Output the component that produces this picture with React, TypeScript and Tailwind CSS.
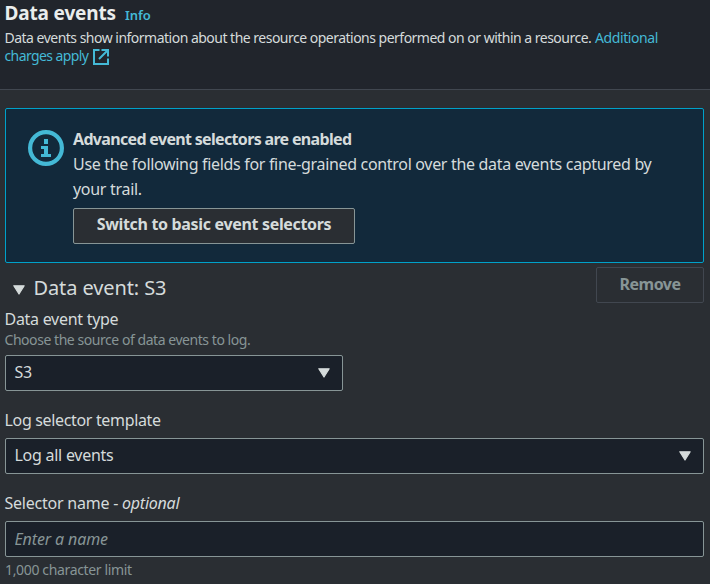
import React from "react";

function Caret() {
  return (
    <svg width="12" height="10" viewBox="0 0 12 10" className="shrink-0 fill-[#d5dbdb] stroke-[#d5dbdb]" strokeLinejoin="round">
      <path d="M.8 .8h10.400L6 9z" strokeWidth="1.200" />
    </svg>
  );
}

function ExternalIcon() {
  return (
    <svg width="16" height="16" viewBox="0 0 16 16" fill="none" className="ml-[5px] shrink-0 stroke-[#44b9d6]" strokeWidth="2">
      <path d="M6.500 1H1v14h14V9.500M8.500 1H15v6.500M14.500 1.500L6 10" />
    </svg>
  );
}

function InfoIcon() {
  return (
    <svg width="36" height="36" viewBox="0 0 36 36" className="mt-[21px] shrink-0 fill-[#44b9d6]">
      <circle cx="18" cy="18" r="15.900" fill="none" className="stroke-[#44b9d6]" strokeWidth="4.200" />
      <path d="M16 9h4v5h-4zM13 16h7v8h3v3H13v-3h3v-5h-3z" />
    </svg>
  );
}

export default function App() {
  return (
    <div className="h-[584px] w-[710px] overflow-hidden whitespace-nowrap bg-[#2a2e33] font-['Noto_Sans',sans-serif] text-[#d5dbdb]">
      <header className="h-[90px] border-b border-[#414750] bg-[#21252c] pl-[4.5px] pt-px">
        <div className="flex h-[25px] items-baseline">
          <h2 className="w-[120.5px] text-[19px] font-bold leading-6 tracking-[-0.15px] text-[#eaeded]">Data events</h2>
          <a className="text-[13px] font-semibold leading-6 tracking-[-0.1px] text-[#44b9d6]">Info</a>
        </div>
        <p className="flex h-5 text-[14px] leading-6 tracking-[-0.51px]">
          <span className="w-[590.5px]">Data events show information about the resource operations performed on or within a resource.</span>
          <a className="tracking-[-0.4px] text-[#44b9d6]">Additional</a>
        </p>
        <div className="flex h-[21px] items-center text-[14px] leading-[19px] tracking-[-0.6px] text-[#44b9d6]">
          <a className="pb-[3px]">charges apply</a>
          <ExternalIcon />
        </div>
      </header>

      <main className="pl-[5px] pr-[6px] pt-[18px]">
        <section className="flex h-[155px] rounded-[2px] border border-[#00a1c9] bg-[#12293b] pl-[22px]">
          <InfoIcon />
          <div className="pl-[9px] pt-[18px] text-[16px] leading-[25px]">
            <p className="font-bold tracking-[-0.67px]">Advanced event selectors are enabled</p>
            <p className="tracking-[-0.32px]">Use the following fields for fine-grained control over the data events captured by</p>
            <p className="tracking-[-0.3px]">your trail.</p>
            <button className="mt-[6px] h-9 w-[282px] rounded-[2px] border border-[#879596] bg-[#2a2e33] pb-[3px] text-[16px] font-bold tracking-[-0.33px]">
              Switch to basic event selectors
            </button>
          </div>
        </section>

        <div className="flex h-[46px] items-start justify-between pt-1">
          <h3 className="flex h-[42px] items-center pl-2 text-[20px]">
            <span className="pt-[3px]"><Caret /></span>
            <span className="pl-[8.5px] tracking-[-0.1px]">Data event: S3</span>
          </h3>
          <button className="h-9 w-[108px] rounded-[2px] border border-[#414750] pb-[2px] text-[16px] font-bold tracking-[-0.5px] text-[#879596]">Remove</button>
        </div>

        <label className="-ml-[0.5px] block h-[20px] text-[16px] leading-5 tracking-[-0.28px]">Data event type</label>
        <p className="-ml-[0.5px] h-[26px] text-[14px] leading-[21px] tracking-[-0.45px] text-[#879596]">Choose the source of data events to log.</p>
        <div className="flex h-9 w-[338px] items-center justify-between rounded-[2px] border border-[#879596] bg-[#1a2029] pl-[8.5px] pr-3">
          <span className="pb-[2px] text-[16px] tracking-[-0.2px]">S3</span>
          <Caret />
        </div>

        <label className="-ml-[0.5px] mt-[19px] block h-7 text-[16px] leading-5 tracking-[-0.34px]">Log selector template</label>
        <div className="flex h-9 items-center justify-between rounded-[2px] border border-[#879596] bg-[#1a2029] pl-[8.5px] pr-3">
          <span className="pb-[2px] text-[16px] tracking-[-0.26px]">Log all events</span>
          <Caret />
        </div>

        <label className="-ml-[0.5px] mt-[19px] block h-7 text-[16px] leading-5 tracking-[-0.23px]">
          Selector name - <i>optional</i>
        </label>
        <input
          placeholder="Enter a name"
          className="block h-9 w-full rounded-[2px] border border-[#879596] bg-[#1a2029] px-[8.5px] text-[16px] tracking-[-0.12px] placeholder:italic placeholder:text-[#879596]"
        />
        <p className="pt-[3px] text-[14px] leading-5 tracking-[-0.35px] text-[#879596]">1,000 character limit</p>
      </main>
    </div>
  );
}
